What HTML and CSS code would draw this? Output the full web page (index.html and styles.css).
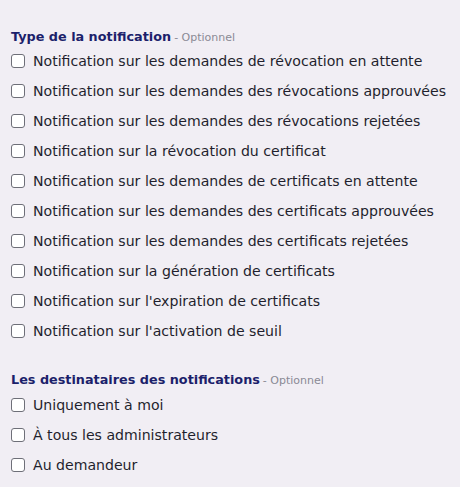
FILE: index.html
```html
<!DOCTYPE html>
<html lang="fr">
<head>
    <meta charset="UTF-8">
    <meta name="viewport" content="width=device-width, initial-scale=1.0">
    <title>Notifications</title>
    <link rel="stylesheet" href="styles.css">
</head>
<body>

    <section class="groupe">
        <h2 class="titre">Type de la notification<span class="optionnel">- Optionnel</span></h2>
        <label class="option"><input type="checkbox"><span class="case"></span>Notification sur les demandes de révocation en attente</label>
        <label class="option"><input type="checkbox"><span class="case"></span>Notification sur les demandes des révocations approuvées</label>
        <label class="option"><input type="checkbox"><span class="case"></span>Notification sur les demandes des révocations rejetées</label>
        <label class="option"><input type="checkbox"><span class="case"></span>Notification sur la révocation du certificat</label>
        <label class="option"><input type="checkbox"><span class="case"></span>Notification sur les demandes de certificats en attente</label>
        <label class="option"><input type="checkbox"><span class="case"></span>Notification sur les demandes des certificats approuvées</label>
        <label class="option"><input type="checkbox"><span class="case"></span>Notification sur les demandes des certificats rejetées</label>
        <label class="option"><input type="checkbox"><span class="case"></span>Notification sur la génération de certificats</label>
        <label class="option"><input type="checkbox"><span class="case"></span>Notification sur l'expiration de certificats</label>
        <label class="option"><input type="checkbox"><span class="case"></span>Notification sur l'activation de seuil</label>
    </section>

    <section class="groupe destinataires">
        <h2 class="titre">Les destinataires des notifications<span class="optionnel">- Optionnel</span></h2>
        <label class="option"><input type="checkbox"><span class="case"></span>Uniquement à moi</label>
        <label class="option"><input type="checkbox"><span class="case"></span>À tous les administrateurs</label>
        <label class="option"><input type="checkbox"><span class="case"></span>Au demandeur</label>
    </section>

</body>
</html>
```

FILE: styles.css
```css
body, html {
    margin: 0;
    padding: 0;
    font-family: "DejaVu Sans", sans-serif;
    background-color: #f1eef4;
    color: #1f1f2d;
}

body {
    padding: 28px 11px 0 11px;
}

.groupe {
    display: flex;
    flex-direction: column;
}

.destinataires {
    margin-top: 25px;
}

.titre {
    margin: 0 0 1px 0;
    height: 17px;
    line-height: 17px;
    font-size: 12.8px;
    font-weight: bold;
    color: #1c1f6b;
    white-space: nowrap;
}

.optionnel {
    margin-left: 3px;
    font-size: 11px;
    font-weight: normal;
    color: #8a8a94;
}

.destinataires .titre {
    margin-bottom: 2px;
}

.option {
    display: flex;
    align-items: center;
    gap: 8px;
    height: 30px;
    font-size: 14.1px;
    white-space: nowrap;
    cursor: pointer;
}

.option input {
    display: none;
}

.case {
    flex: none;
    width: 12px;
    height: 12px;
    border: 1.5px solid #6e6f78;
    border-radius: 3px;
    background-color: #fff;
}
```
